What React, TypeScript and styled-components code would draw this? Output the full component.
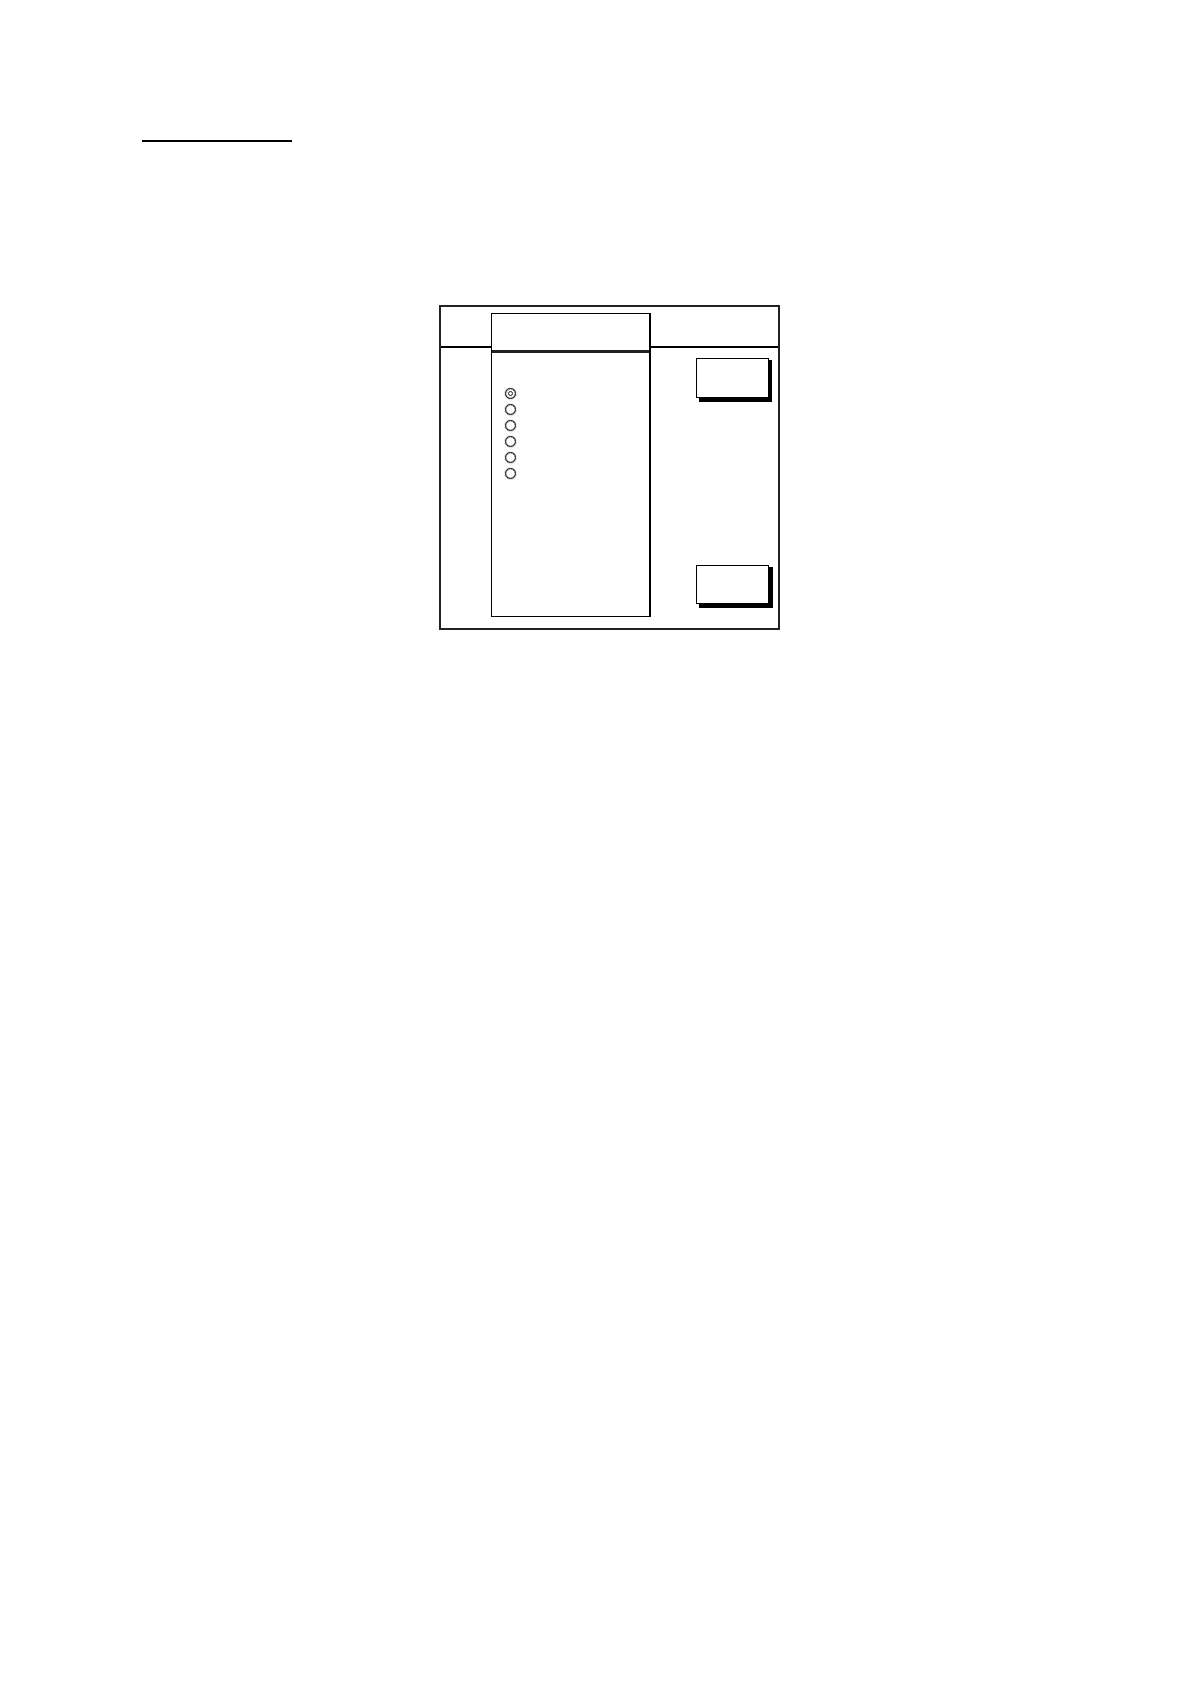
import React, { useState } from 'react';
import styled, { createGlobalStyle } from 'styled-components';

const GlobalStyle = createGlobalStyle`
  *, *::before { box-sizing: border-box; }
  body { margin: 0; background: #fff; font-family: "Liberation Sans", Arial, sans-serif; }
`;

const Page = styled.main`
  min-height: 100vh;
  padding: 140px 113px 60px 142px;
`;

const HeadingRule = styled.hr`
  width: 150px;
  height: 2px;
  margin: 0 0 163px;
  border: 0;
  background: #000;
`;

const Screen = styled.section`
  position: relative;
  display: flex;
  flex-direction: column;
  width: 341px;
  height: 325px;
  margin: 0 auto;
  border: 2px solid #222;
`;

const ScreenHeader = styled.header`
  height: 41px;
  border-bottom: 2px solid #000;
`;

const Actions = styled.div`
  flex: 1;
  display: flex;
  flex-direction: column;
  justify-content: space-between;
  align-items: flex-end;
  padding: 10px 9px 24px;
`;

const ActionButton = styled.button<{ $height: number; $depth: number }>`
  width: 73px;
  height: ${(p) => p.$height}px;
  padding: 0;
  border: 1px solid #000;
  border-radius: 0;
  background: #fff;
  box-shadow: 3px 2px #000, 3px 4px #000, ${(p) => p.$depth}px 4px #000, ${(p) => p.$depth}px 2px #000;
  cursor: pointer;
`;

const Dialog = styled.div`
  position: absolute;
  top: 6px;
  left: 50px;
  width: 160px;
  height: 304px;
  border: 1px solid #000;
  border-right-width: 2px;
  background: #fff;
`;

const DialogHeader = styled.header`
  height: 39px;
  border-bottom: 3px solid #222;
`;

const Options = styled.fieldset`
  display: flex;
  flex-direction: column;
  gap: 5px;
  margin: 0;
  padding: 35px 13px 0;
  border: 0;
`;

const Radio = styled.input`
  appearance: none;
  display: grid;
  place-items: center;
  width: 11px;
  height: 11px;
  margin: 0;
  border: 1px solid #111;
  border-radius: 50%;
  box-shadow: 0 0 1px #000, inset 0 0 1px #000;

  &:checked::before {
    content: "";
    width: 5px;
    height: 5px;
    border: 1px solid #222;
    border-radius: 50%;
  }
`;

const OPTIONS = [1, 2, 3, 4, 5, 6];

export default function App() {
  const [selected, setSelected] = useState(1);

  return (
    <>
      <GlobalStyle />
      <Page>
        <HeadingRule />
        <Screen>
          <ScreenHeader />
          <Actions>
            <ActionButton type="button" aria-label="Confirm" $height={40} $depth={3} />
            <ActionButton type="button" aria-label="Close" $height={39} $depth={4} />
          </Actions>
          <Dialog role="dialog" aria-label="Options">
            <DialogHeader />
            <Options aria-label="Options">
              {OPTIONS.map((n) => (
                <Radio
                  key={n}
                  type="radio"
                  name="option"
                  aria-label={`Option ${n}`}
                  checked={selected === n}
                  onChange={() => setSelected(n)}
                />
              ))}
            </Options>
          </Dialog>
        </Screen>
      </Page>
    </>
  );
}
